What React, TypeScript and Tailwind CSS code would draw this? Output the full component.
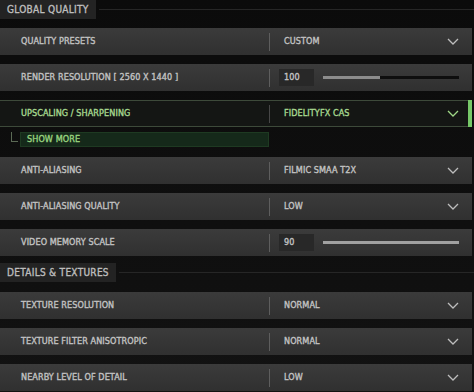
import React from 'react';

const font = { fontFamily: '"DejaVu Sans Condensed", Roboto, sans-serif' };

const Chevron = ({ green = false }: { green?: boolean }) => (
    <svg width="12" height="7" viewBox="0 0 12 7" className="shrink-0">
        <path d="M1 1 L6 6 L11 1" fill="none" stroke={green ? '#9fd887' : '#bdbdbd'} strokeWidth="1.3" />
    </svg>
);

const SectionHeader = ({ title, mt }: { title: string; mt: string }) => (
    <div className={`flex items-center ${mt}`}>
        <div className="h-[19px] bg-[#232323] pl-[7px] pr-[7px] flex items-center text-[10px] tracking-[0.03em] [-webkit-text-stroke:0.35px_#bdbdbd] text-[#bdbdbd]">
            {title}
        </div>
        <div className="flex-1 h-px bg-[#262626] ml-[3px]" />
    </div>
);

const rowText = 'text-[9px] tracking-[0.01em] [-webkit-text-stroke:0.35px_currentColor]';

const SelectRow = ({ label, value }: { label: string; value: string }) => (
    <div className={`mt-[9px] h-[27px] w-[472px] flex items-center bg-gradient-to-b from-[#3b3b3b] to-[#303030] text-[#c2c2c2] ${rowText}`}>
        <div className="w-[269px] pl-[21px]">{label}</div>
        <div className="w-px h-[18px] bg-[#5e5e5e]" />
        <div className="flex-1 pl-[14px]">{value}</div>
        <div className="pr-[13px]"><Chevron /></div>
    </div>
);

const SliderRow = ({ label, value, pct, fill }: { label: string; value: string; pct: number; fill: string }) => (
    <div className={`mt-[9px] h-[27px] w-[472px] flex items-center bg-gradient-to-b from-[#3b3b3b] to-[#303030] text-[#c2c2c2] ${rowText}`}>
        <div className="w-[269px] pl-[21px]">{label}</div>
        <div className="w-px h-[18px] bg-[#5e5e5e]" />
        <div className="ml-[9px] w-[35px] h-[17px] bg-[#282828] flex items-center pl-[5px]">{value}</div>
        <div className="ml-[9px] w-[136px] h-[3px] bg-[#0e0e0e]">
            <div className={`h-full ${fill}`} style={{ width: `${pct}%` }} />
        </div>
    </div>
);

export default function App() {
    return (
        <div style={font} className="w-[474px] h-[392px] overflow-hidden bg-gradient-to-b from-[#0b0b0b] to-[#121212] flex flex-col">
            <SectionHeader title="GLOBAL QUALITY" mt="mt-0" />
            <SelectRow label="QUALITY PRESETS" value="CUSTOM" />
            <SliderRow label="RENDER RESOLUTION [ 2560 X 1440 ]" value="100" pct={42} fill="bg-[#8c8c8c]" />

            <div className={`mt-[9px] h-[27px] w-[472px] flex items-center bg-[#141614] border-y border-[#3d4a3a] text-[#a6d88f] ${rowText}`}>
                <div className="w-[269px] pl-[21px]">UPSCALING / SHARPENING</div>
                <div className="w-px h-[18px] bg-[#474747]" />
                <div className="flex-1 pl-[14px]">FIDELITYFX CAS</div>
                <div className="pr-[9px]"><Chevron green /></div>
                <div className="w-[4px] h-[27px] bg-[#76c868]" />
            </div>

            <div className="mt-[5px] flex items-start">
                <div className="ml-[11px] w-[7px] h-[10px] border-l border-b border-[#5b6a55]" />
                <div className={`ml-[2px] w-[249px] h-[15px] bg-[#15291a] border border-[#1e3a22] flex items-center pl-[6px] text-[#98d37f] ${rowText}`}>
                    SHOW MORE
                </div>
            </div>

            <div className="mt-[1px]">
                <SelectRow label="ANTI-ALIASING" value="FILMIC SMAA T2X" />
            </div>
            <SelectRow label="ANTI-ALIASING QUALITY" value="LOW" />
            <SliderRow label="VIDEO MEMORY SCALE" value="90" pct={100} fill="bg-[#a0a0a0]" />

            <SectionHeader title="DETAILS & TEXTURES" mt="mt-[7px]" />
            <div className="mt-px">
                <SelectRow label="TEXTURE RESOLUTION" value="NORMAL" />
            </div>
            <SelectRow label="TEXTURE FILTER ANISOTROPIC" value="NORMAL" />
            <SelectRow label="NEARBY LEVEL OF DETAIL" value="LOW" />
        </div>
    );
}
